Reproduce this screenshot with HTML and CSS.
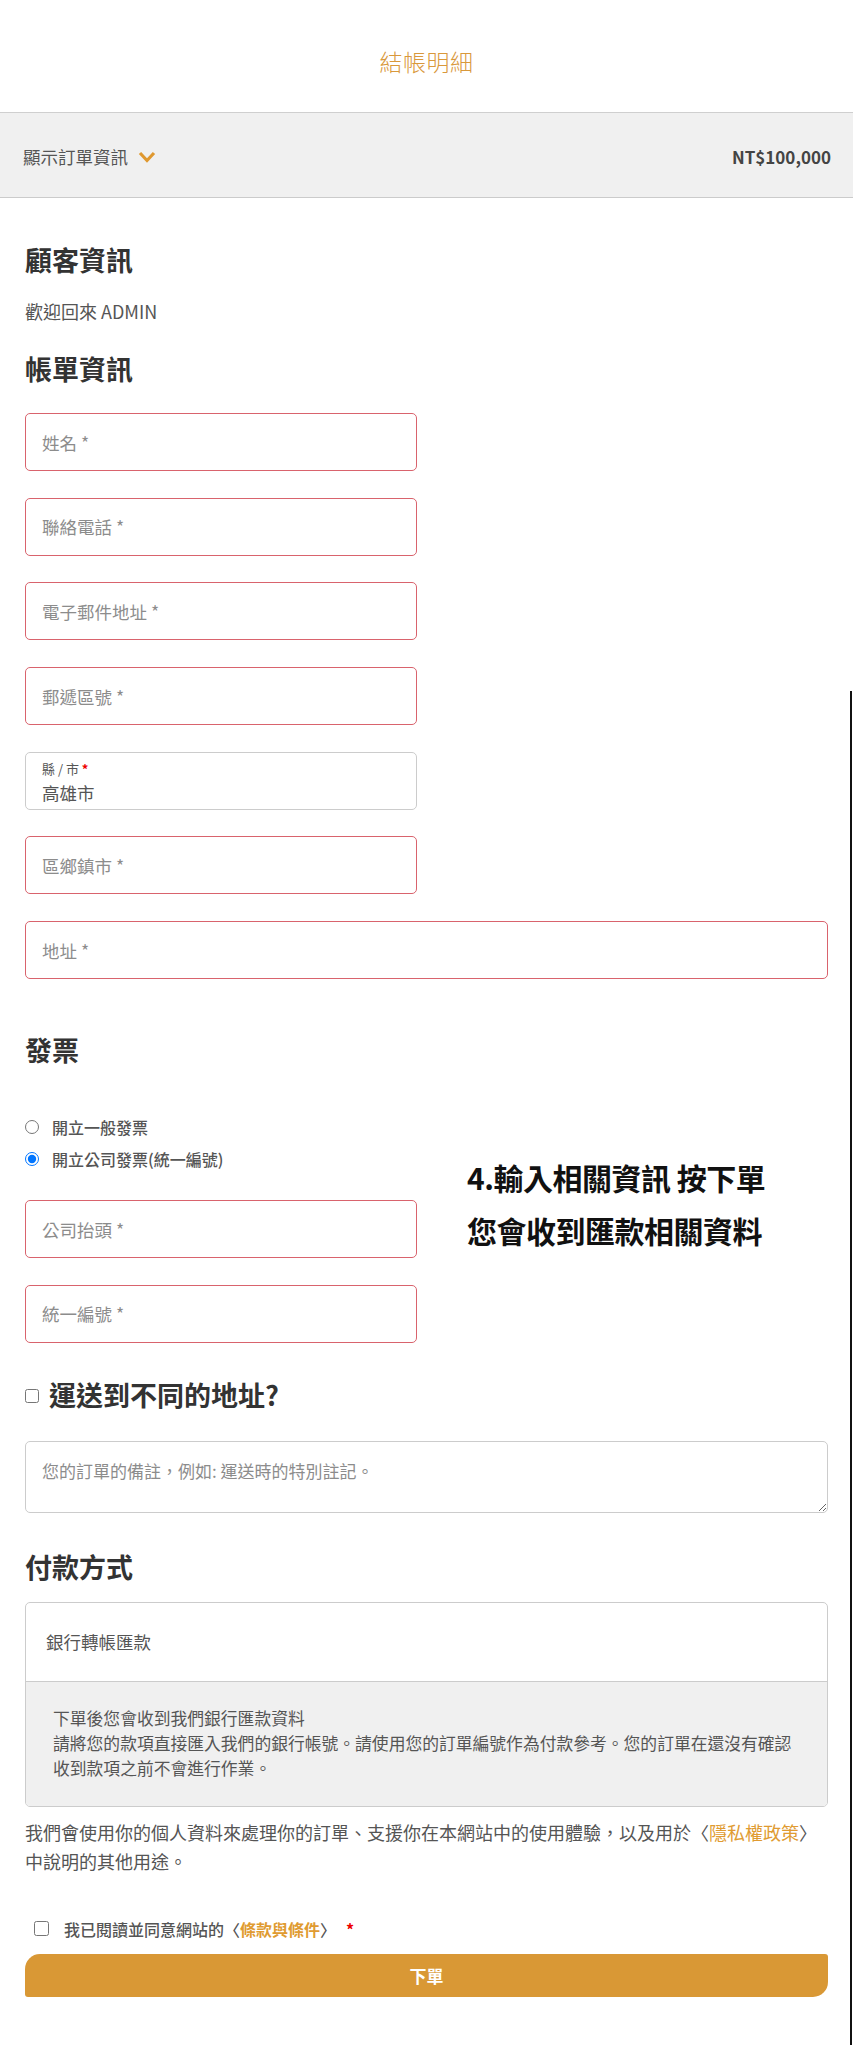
FILE: index.html
```html
<!DOCTYPE html>
<html lang="zh-Hant">
<head>
<meta charset="utf-8">
<title>結帳明細</title>
<link rel="stylesheet" href="styles.css">
</head>
<body>
<div class="page">
  <header class="site-title">結帳明細</header>
  <div class="order-bar">
    <div class="order-toggle">顯示訂單資訊
      <svg class="chev" width="18" height="12" viewBox="0 0 18 12"><path d="M2 2 L9 9.5 L16 2" fill="none" stroke="#df982f" stroke-width="3.2"/></svg>
    </div>
    <div class="order-total">NT$100,000</div>
  </div>

  <main class="content">
    <h2 class="h-customer">顧客資訊</h2>
    <p class="welcome">歡迎回來 ADMIN</p>

    <h2 class="h-billing">帳單資訊</h2>
    <div class="fields">
      <input class="field half invalid" placeholder="姓名 *">
      <input class="field half invalid" placeholder="聯絡電話 *">
      <input class="field half invalid" placeholder="電子郵件地址 *">
      <input class="field half invalid" placeholder="郵遞區號 *">
      <div class="field half select-field">
        <span class="sel-label">縣 / 市 <span class="req">*</span></span>
        <span class="sel-value">高雄市</span>
      </div>
      <input class="field half invalid" placeholder="區鄉鎮市 *">
      <input class="field full invalid" placeholder="地址 *">
    </div>

    <h2 class="h-invoice">發票</h2>
    <div class="invoice-grid">
      <div class="invoice-left">
        <label class="radio-row"><input type="radio" name="inv"> 開立一般發票</label>
        <label class="radio-row"><input type="radio" name="inv" checked> 開立公司發票(統一編號)</label>
        <div class="fields company">
          <input class="field half invalid" placeholder="公司抬頭 *">
          <input class="field half invalid" placeholder="統一編號 *">
        </div>
      </div>
      <div class="annotation">4.輸入相關資訊 按下單<br>您會收到匯款相關資料</div>
    </div>

    <h2 class="h-ship"><input type="checkbox" class="ship-check"> 運送到不同的地址?</h2>
    <textarea class="notes" placeholder="您的訂單的備註，例如: 運送時的特別註記。"></textarea>

    <h2 class="h-pay">付款方式</h2>
    <div class="pay-box">
      <div class="pay-title">銀行轉帳匯款</div>
      <div class="pay-desc">下單後您會收到我們銀行匯款資料<br>請將您的款項直接匯入我們的銀行帳號。請使用您的訂單編號作為付款參考。您的訂單在還沒有確認<br>收到款項之前不會進行作業。</div>
    </div>

    <p class="privacy">我們會使用你的個人資料來處理你的訂單、支援你在本網站中的使用體驗，以及用於〈<span class="link">隱私權政策</span>〉<br>中說明的其他用途。</p>

    <label class="terms"><input type="checkbox" class="terms-check"> 我已閱讀並同意網站的〈<span class="link strong">條款與條件</span>〉 <span class="req">*</span></label>

    <button class="submit">下單</button>
  </main>
  <div class="edge-line"></div>
</div>
</body>
</html>
```

FILE: styles.css
```css
* { box-sizing: border-box; }
html, body { margin: 0; padding: 0; background: #fff; }
body {
  font-family: "Noto Sans CJK TC", "Noto Sans", sans-serif;
  color: #555;
  font-size: 17px;
}
.page { position: relative; min-height: 2045px; }

.site-title {
  height: 113px;
  border-bottom: 1px solid #cfcfcf;
  display: flex;
  align-items: center;
  justify-content: center;
  padding-top: 10px;
  font-size: 23px;
  font-weight: 300;
  color: #d9983b;
  letter-spacing: 0.5px;
}

.order-bar {
  height: 85px;
  background: #f0f0f0;
  border-bottom: 1px solid #cbcbcb;
  display: flex;
  align-items: center;
  justify-content: space-between;
  padding: 2px 22px 0 23px;
}
.order-toggle {
  display: flex;
  align-items: center;
  gap: 10px;
  font-size: 17.5px;
  color: #555;
}
.chev { display: block; margin-top: 1px; }
.order-total {
  font-size: 17px;
  font-weight: 700;
  color: #444;
}

.content { padding: 0 25px; }

h2 {
  margin: 0;
  font-size: 27px;
  line-height: 36px;
  font-weight: 700;
  color: #333;
}
.h-customer { margin-top: 44px; }
.welcome { margin: 21px 0 0; font-size: 18px; line-height: 24px; color: #555; }
.h-billing { margin-top: 28px; }

.fields {
  display: flex;
  flex-direction: column;
  gap: 26.7px;
  margin-top: 26px;
}
.field {
  height: 58px;
  border: 1px solid #ccc;
  border-radius: 5px;
  background: #fff;
  font-family: inherit;
  font-size: 17.5px;
  color: #555;
  padding: 0 16px;
  margin: 0;
  outline: none;
}
.field::placeholder { color: #8c8c8c; }
.field.invalid { border-color: #d9636d; }
.half { width: 392px; }
.full { width: 100%; }

.select-field {
  display: flex;
  flex-direction: column;
  padding-top: 8px;
}
.sel-label { font-size: 13px; line-height: 16px; color: #555; }
.req { color: #e00; font-weight: 700; }
.sel-value { font-size: 17.5px; line-height: 22px; margin-top: 5px; color: #555; }

.h-invoice { margin-top: 53px; }

.invoice-grid {
  display: grid;
  grid-template-columns: 392px 1fr;
  column-gap: 50px;
  margin-top: 47px;
}
.radio-row {
  display: flex;
  align-items: center;
  gap: 13px;
  height: 24px;
  font-size: 16px;
  font-weight: 500;
  color: #555;
  margin-bottom: 8px;
}
.radio-row input { margin: 0; width: 14px; height: 14px; }
.fields.company { margin-top: 29px; }

.annotation {
  padding-top: 36px;
  font-size: 30px;
  line-height: 53px;
  font-weight: 700;
  color: #111;
  white-space: nowrap;
  letter-spacing: -0.5px;
}

.h-ship {
  margin-top: 34px;
  display: flex;
  align-items: center;
  gap: 10px;
}
.ship-check { margin: 2px 0 0; width: 14px; height: 14px; }

.notes {
  display: block;
  width: 100%;
  height: 72px;
  margin-top: 28px;
  border: 1px solid #ccc;
  border-radius: 5px;
  padding: 17px 16px;
  font-family: inherit;
  font-size: 17px;
  line-height: 24px;
  color: #555;
  outline: none;
}
.notes::placeholder { color: #8c8c8c; }

.h-pay { margin-top: 36px; }

.pay-box {
  margin-top: 17px;
  border: 1px solid #ccc;
  border-radius: 5px;
  overflow: hidden;
}
.pay-title {
  height: 79px;
  border-bottom: 1px solid #ccc;
  display: flex;
  align-items: center;
  padding-left: 20px;
  font-size: 17.5px;
  color: #555;
}
.pay-desc {
  background: #f0f0f0;
  padding: 24px 16px 25px 27px;
  font-size: 16.8px;
  line-height: 25px;
  color: #555;
  white-space: nowrap;
}

.privacy {
  margin: 11px 0 0;
  font-size: 18px;
  line-height: 29px;
  color: #555;
}
.link { color: #e09b31; }
.link.strong { font-weight: 700; }

.terms {
  display: flex;
  align-items: center;
  height: 24px;
  margin-top: 41px;
  padding-left: 9px;
  font-size: 16px;
  color: #555;
  font-weight: 500;
}
.terms-check { margin: 0 15px 0 0; width: 15px; height: 15px; }
.terms .req { margin-left: 10px; }

.submit {
  display: block;
  width: 100%;
  height: 43px;
  margin-top: 13px;
  border: none;
  border-radius: 15px 3px 15px 3px;
  background: #d99835;
  color: #fff;
  font-family: inherit;
  font-size: 17px;
  font-weight: 700;
}

.edge-line {
  position: absolute;
  left: 850px;
  top: 691px;
  width: 2px;
  height: 1354px;
  background: #111;
}
```
